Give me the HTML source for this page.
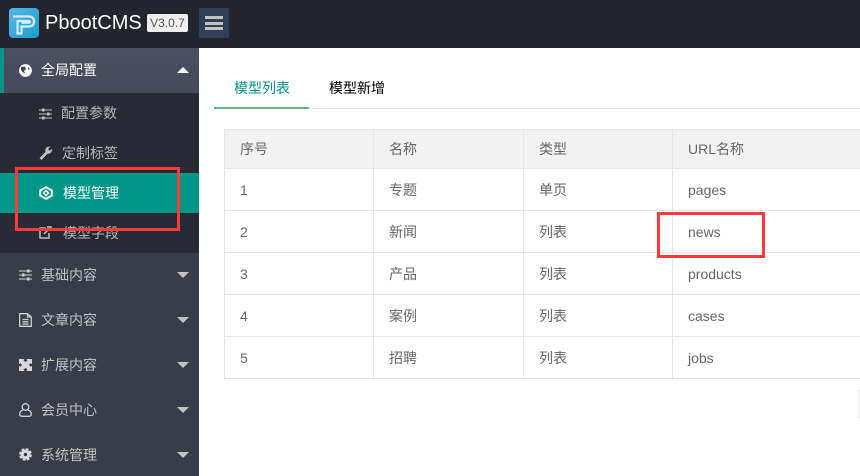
<!DOCTYPE html>
<html lang="zh-CN"><head><meta charset="utf-8"><title>PbootCMS</title>
<style>
*{box-sizing:border-box;margin:0;padding:0}
html,body{width:860px;height:476px;overflow:hidden;background:#fff;font-family:"Liberation Sans","Noto Sans CJK SC",sans-serif;font-size:14px;color:#666}
.a{position:absolute}
#hd{left:0;top:0;width:860px;height:48px;background:#23262e}
#side{left:0;top:48px;width:199px;height:428px;background:#393d49}
.t{position:absolute;white-space:nowrap;line-height:20px}
.it{color:#c2c2c2;left:41px}
.sub{color:#b5b5b5;left:62px}
.ar{position:absolute;left:177px;width:0;height:0;border-left:6px solid transparent;border-right:6px solid transparent;border-top:6px solid #c2c2c2}
svg{position:absolute;display:block}
.h{position:absolute;background:#e6e6e6}
.c{position:absolute;white-space:nowrap;line-height:20px;color:#666}
.r{position:absolute;border:3px solid #fb3a3a}
</style></head><body>
<div id="hd" class="a"></div>
<svg style="left:9px;top:8px" width="30" height="30" viewBox="0 0 30 30">
<defs><linearGradient id="g" x1="0" y1="0" x2="1" y2="1"><stop offset="0" stop-color="#55b8e2"/><stop offset="1" stop-color="#1f9bd3"/></linearGradient></defs>
<rect width="30" height="30" rx="4" fill="url(#g)"/>
<path d="M4 8.500H19.500Q25 8.500 25 13.500Q25 18.500 19.500 18.500H12.500V25.500H8.500V13H19Q21 13 21 13.800Q21 14.800 19 14.800H12.500" fill="none" stroke="#d5ecf7" stroke-width="2.200"/>
</svg>
<div class="t" style="left:45px;top:10px;font-size:20px;line-height:26px;color:#fff">PbootCMS</div>
<div class="a" style="left:147px;top:14px;width:41px;height:18px;background:#eee;border-radius:2px;color:#555;font-size:12px;line-height:18px;text-align:center;white-space:nowrap">V3.0.7</div>
<div class="a" style="left:199px;top:8px;width:30px;height:30px;background:#2f4056"></div>
<div class="a" style="left:205px;top:16px;width:18px;height:3px;background:#c2c2c2"></div>
<div class="a" style="left:205px;top:22px;width:18px;height:3px;background:#c2c2c2"></div>
<div class="a" style="left:205px;top:27px;width:18px;height:3px;background:#c2c2c2"></div>

<div id="side" class="a"></div>
<div class="a" style="left:0;top:48px;width:199px;height:45px;background:linear-gradient(#4b4f60,#454959)"></div>
<div class="a" style="left:0;top:48px;width:4px;height:45px;background:#009688"></div>
<div class="a" style="left:0;top:93px;width:199px;height:160px;background:#282b35"></div>
<div class="a" style="left:0;top:173px;width:199px;height:40px;background:#009688"></div>

<svg style="left:19px;top:64px" width="13" height="13" viewBox="0 0 13 13"><circle cx="6.500" cy="6.500" r="6.400" fill="#fff"/><path d="M2 3L6 2.500L7 5L5 7L6 9.500L3.500 8L2 6Z" fill="#3f4352"/><path d="M9 3L10.500 5L9 6Z" fill="#3f4352"/></svg>
<div class="t" style="left:41px;top:60px;color:#fff">全局配置</div>
<div class="a" style="left:177px;top:67px;width:0;height:0;border-left:6px solid transparent;border-right:6px solid transparent;border-bottom:6px solid #fff"></div>

<svg style="left:39px;top:108px" width="13" height="12" viewBox="0 0 13 12" stroke="#c2c2c2" fill="#c2c2c2"><path d="M0 2H13M0 6H13M0 10H13" stroke-width="1"/><rect x="3" y="0.500" width="2.500" height="3" stroke="none"/><rect x="8" y="4.500" width="2.500" height="3" stroke="none"/><rect x="3" y="8.500" width="2.500" height="3" stroke="none"/></svg>
<div class="t sub" style="left:61px;top:103px">配置参数</div>

<svg style="left:39px;top:146px" width="14" height="14" viewBox="0 0 14 14"><path d="M.5 12L6.500 6Q5.500 2 9 .8L11.500 .6L9 3L10.800 4.800L13.300 2.500Q13.500 7.500 8.200 8L2.500 14Z" fill="#c2c2c2"/></svg>
<div class="t sub" style="top:143px">定制标签</div>

<svg style="left:39px;top:186px" width="14" height="14" viewBox="0 0 14 14" fill="none" stroke="#fff" stroke-width="2"><path d="M7 1.200L12.800 4.500V9.500L7 12.800L1.200 9.500V4.500Z"/><path d="M7 4.500L9.500 7L7 9.500L4.500 7Z" stroke-width="1.300"/></svg>
<div class="t" style="left:63px;top:183px;color:#fff">模型管理</div>

<svg style="left:39px;top:226px" width="13" height="13" viewBox="0 0 13 13" fill="none" stroke="#c2c2c2" stroke-width="1.500"><path d="M7 2H1V12H10V7"/><path d="M5 8L11 2M8 1H12V5"/></svg>
<div class="t sub" style="left:63px;top:223px">模型字段</div>

<svg style="left:19px;top:269px" width="13" height="12" viewBox="0 0 13 12" fill="#d0d0d0"><path d="M0 2H13M0 6H13M0 10H13" stroke="#d0d0d0"/><rect x="8" y="0.500" width="2.500" height="3"/><rect x="3" y="4.500" width="2.500" height="3"/><rect x="8" y="8.500" width="2.500" height="3"/></svg>
<div class="t it" style="top:265px">基础内容</div><div class="ar" style="top:272px"></div>

<svg style="left:19px;top:313px" width="13" height="14" viewBox="0 0 13 14" fill="none" stroke="#d0d0d0" stroke-width="1.300"><path d="M.7 .7H8.500L12.300 4V13.300H.7ZM8.500 .7V4H12.300M3.500 6.500H9.500M3.500 8.800H9.500M3.500 11H9.500"/></svg>
<div class="t it" style="top:310px">文章内容</div><div class="ar" style="top:317px"></div>

<svg style="left:19px;top:359px" width="13" height="12" viewBox="0 0 13 12" fill="#d8d8d8"><path d="M0 0H5.500L4.500 1.500L6.500 3L8.500 1.500L7.500 0H13V5L11.500 4.200L10 6L11.500 7.800L13 7V12H7.500L8.500 10.500L6.500 9L4.500 10.500L5.500 12H0V7L1.500 7.800L3 6L1.500 4.200L0 5Z"/></svg>
<div class="t it" style="top:355px">扩展内容</div><div class="ar" style="top:362px"></div>

<svg style="left:19px;top:403px" width="13" height="14" viewBox="0 0 13 14" fill="none" stroke="#d0d0d0" stroke-width="1.300"><circle cx="6.500" cy="4" r="3.300"/><path d="M4 7Q.7 8 .7 11Q.7 13.300 3 13.300H10Q12.300 13.300 12.300 11Q12.300 8 9 7"/></svg>
<div class="t it" style="top:400px">会员中心</div><div class="ar" style="top:407px"></div>

<svg style="left:19px;top:448px" width="13" height="13" viewBox="0 0 13 13"><circle cx="6.500" cy="6.500" r="3.300" fill="none" stroke="#d8d8d8" stroke-width="3.200"/><circle cx="6.500" cy="6.500" r="5.400" fill="none" stroke="#d8d8d8" stroke-width="2" stroke-dasharray="2.800 1.440"/></svg>
<div class="t it" style="top:445px">系统管理</div><div class="ar" style="top:452px"></div>

<div class="h" style="left:214px;top:108px;width:646px;height:1px"></div>
<div class="a" style="left:214px;top:107px;width:95px;height:2px;background:#5fb878"></div>
<div class="t" style="left:234px;top:78px;color:#009688">模型列表</div>
<div class="t" style="left:329px;top:78px;color:#000">模型新增</div>

<div class="a" style="left:224px;top:129px;width:636px;height:40px;background:#f2f2f2"></div>
<div class="h" style="left:224px;top:129px;width:636px;height:1px"></div>
<div class="h" style="left:224px;top:168px;width:636px;height:1px"></div>
<div class="h" style="left:224px;top:210px;width:636px;height:1px"></div>
<div class="h" style="left:224px;top:252px;width:636px;height:1px"></div>
<div class="h" style="left:224px;top:294px;width:636px;height:1px"></div>
<div class="h" style="left:224px;top:336px;width:636px;height:1px"></div>
<div class="h" style="left:224px;top:378px;width:636px;height:1px"></div>
<div class="h" style="left:224px;top:129px;width:1px;height:250px"></div>
<div class="h" style="left:373px;top:129px;width:1px;height:250px"></div>
<div class="h" style="left:523px;top:129px;width:1px;height:250px"></div>
<div class="h" style="left:672px;top:129px;width:1px;height:250px"></div>

<div class="c" style="left:240px;top:139px">序号</div><div class="c" style="left:389px;top:139px">名称</div><div class="c" style="left:539px;top:139px">类型</div><div class="c" style="left:688px;top:139px">URL名称</div>
<div class="c" style="left:240px;top:180px">1</div><div class="c" style="left:389px;top:180px">专题</div><div class="c" style="left:539px;top:180px">单页</div><div class="c" style="left:688px;top:180px">pages</div>
<div class="c" style="left:240px;top:222px">2</div><div class="c" style="left:389px;top:222px">新闻</div><div class="c" style="left:539px;top:222px">列表</div><div class="c" style="left:688px;top:222px">news</div>
<div class="c" style="left:240px;top:264px">3</div><div class="c" style="left:389px;top:264px">产品</div><div class="c" style="left:539px;top:264px">列表</div><div class="c" style="left:688px;top:264px">products</div>
<div class="c" style="left:240px;top:306px">4</div><div class="c" style="left:389px;top:306px">案例</div><div class="c" style="left:539px;top:306px">列表</div><div class="c" style="left:688px;top:306px">cases</div>
<div class="c" style="left:240px;top:348px">5</div><div class="c" style="left:389px;top:348px">招聘</div><div class="c" style="left:539px;top:348px">列表</div><div class="c" style="left:688px;top:348px">jobs</div>

<div class="h" style="left:859px;top:390px;width:1px;height:28px"></div>
<div class="r" style="left:15px;top:167px;width:165px;height:64px"></div>
<div class="r" style="left:657px;top:212px;width:108px;height:46px"></div>
</body></html>
